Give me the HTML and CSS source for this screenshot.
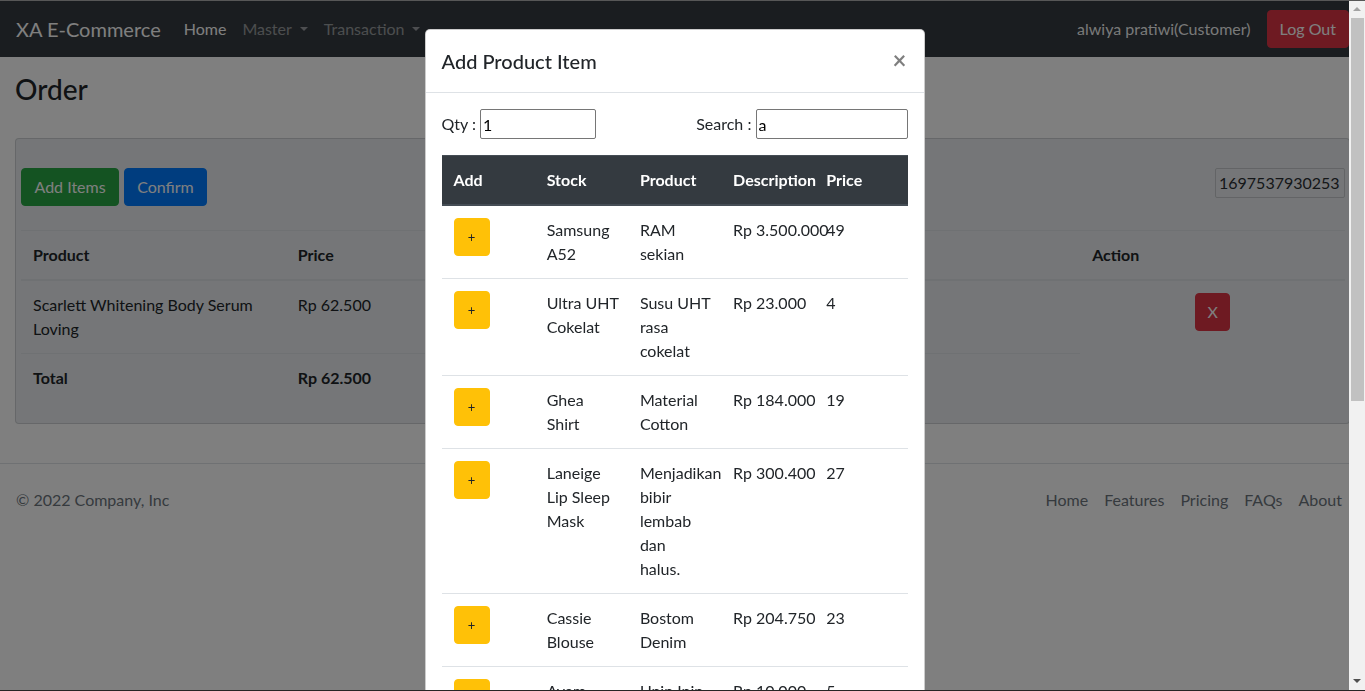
FILE: index.html
```html
<!DOCTYPE html>
<html lang="en">
<head>
<meta charset="utf-8">
<title>Order - XA E-Commerce</title>
<link rel="stylesheet" href="styles.css">
</head>
<body>
<nav class="navbar">
  <a class="brand">XA E-Commerce</a>
  <ul class="nav">
    <li><a class="nav-link active">Home</a></li>
    <li><a class="nav-link dropdown">Master</a></li>
    <li><a class="nav-link dropdown">Transaction</a></li>
  </ul>
  <div class="nav-user">
    <span class="user">alwiya pratiwi(Customer)</span>
    <button class="btn btn-danger">Log Out</button>
  </div>
</nav>

<main class="container">
  <h3 class="page-title">Order</h3>
  <div class="card">
    <div class="card-toolbar">
      <div class="btn-row">
        <button class="btn btn-success">Add Items</button>
        <button class="btn btn-primary">Confirm</button>
      </div>
      <input class="order-no" value="1697537930253">
    </div>
    <table class="table order-table">
      <thead>
        <tr><th>Product</th><th>Price</th><th>Qty</th><th>Sub Total</th><th>Action</th></tr>
      </thead>
      <tbody>
        <tr>
          <td>Scarlett Whitening Body Serum Loving</td>
          <td>Rp 62.500</td>
          <td>1</td>
          <td>Rp 62.500</td>
          <td rowspan="2" class="center"><button class="btn btn-danger btn-x">X</button></td>
        </tr>
        <tr class="total">
          <td>Total</td><td>Rp 62.500</td><td></td><td></td>
        </tr>
      </tbody>
    </table>
  </div>
</main>

<footer class="footer">
  <span class="copy">© 2022 Company, Inc</span>
  <ul class="footer-nav">
    <li><a>Home</a></li>
    <li><a>Features</a></li>
    <li><a>Pricing</a></li>
    <li><a>FAQs</a></li>
    <li><a>About</a></li>
  </ul>
</footer>

<div class="backdrop"></div>

<div class="modal">
  <div class="modal-dialog">
    <div class="modal-content">
      <div class="modal-header">
        <h5 class="modal-title">Add Product Item</h5>
        <button class="close">×</button>
      </div>
      <div class="modal-body">
        <div class="filters">
          <label>Qty : <input class="qty" value="1"></label>
          <label>Search : <input class="search" value="a"></label>
        </div>
        <table class="table product-table">
          <thead>
            <tr><th>Add</th><th>Stock</th><th>Product</th><th>Description</th><th>Price</th></tr>
          </thead>
          <tbody>
            <tr><td><button class="btn btn-warning btn-add">+</button></td><td>Samsung<br>A52</td><td>RAM<br>sekian</td><td class="nw">Rp 3.500.000</td><td>49</td></tr>
            <tr><td><button class="btn btn-warning btn-add">+</button></td><td>Ultra UHT<br>Cokelat</td><td>Susu UHT<br>rasa<br>cokelat</td><td class="nw">Rp 23.000</td><td>4</td></tr>
            <tr><td><button class="btn btn-warning btn-add">+</button></td><td>Ghea<br>Shirt</td><td>Material<br>Cotton</td><td class="nw">Rp 184.000</td><td>19</td></tr>
            <tr><td><button class="btn btn-warning btn-add">+</button></td><td>Laneige<br>Lip Sleep<br>Mask</td><td>Menjadikan<br>bibir<br>lembab<br>dan<br>halus.</td><td class="nw">Rp 300.400</td><td>27</td></tr>
            <tr><td><button class="btn btn-warning btn-add">+</button></td><td>Cassie<br>Blouse</td><td>Bostom<br>Denim</td><td class="nw">Rp 204.750</td><td>23</td></tr>
            <tr><td><button class="btn btn-warning btn-add">+</button></td><td>Ayam<br>Goreng</td><td>Unin Inin</td><td class="nw">Rp 10.000</td><td>5</td></tr>
          </tbody>
        </table>
      </div>
    </div>
  </div>
</div>

<div class="scrollbar">
  <span class="arrow up"></span>
  <span class="thumb"></span>
  <span class="arrow down"></span>
</div>
<div class="frame"></div>
</body>
</html>
```

FILE: styles.css
```css
* { box-sizing: border-box; }

html, body { height: 100%; }

body {
  margin: 0;
  padding-top: 1px;
  font-family: Lato, "Liberation Sans", sans-serif;
  font-size: 16px;
  line-height: 1.5;
  color: #212529;
  background: #fff;
  overflow: hidden;
}

ul { list-style: none; margin: 0; padding: 0; }

/* ---------- navbar ---------- */
.navbar {
  display: flex;
  align-items: center;
  height: 56px;
  padding: 8px 16px;
  background: #343a40;
}
.brand {
  font-size: 20px;
  line-height: 30px;
  padding: 5px 0;
  margin-right: 15px;
  color: #fff;
}
.nav { display: flex; }
.nav-link {
  display: block;
  padding: 8px;
  color: rgba(255, 255, 255, .5);
}
.nav-link.active { color: #fff; }
.dropdown::after {
  content: "";
  display: inline-block;
  margin-left: 8px;
  vertical-align: .255em;
  border-top: .3em solid;
  border-right: .3em solid transparent;
  border-left: .3em solid transparent;
}
.nav-user {
  margin-left: auto;
  display: flex;
  align-items: center;
  gap: 16px;
}
.user { color: rgba(255, 255, 255, .95); }

/* ---------- buttons ---------- */
.btn {
  display: inline-block;
  font-family: inherit;
  font-size: 16px;
  line-height: 24px;
  padding: 6px 12px;
  border: 1px solid transparent;
  border-radius: 4px;
  color: #fff;
  cursor: pointer;
}
.btn-danger { background: #dc3545; border-color: #dc3545; }
.btn-success { background: #28a745; border-color: #28a745; }
.btn-primary { background: #007bff; border-color: #007bff; }
.btn-warning { background: #ffc107; border-color: #ffc107; color: #212529; }

/* ---------- page ---------- */
.container { padding: 0 15px; }
.page-title {
  font-size: 28px;
  font-weight: 500;
  line-height: 1.2;
  margin: 16px 0 31px 0;
}
.card {
  background: #eaedf0;
  border: 1px solid rgba(0, 0, 0, .125);
  border-radius: 4px;
  padding: 29px 4px 5px 5px;
}
.card-toolbar {
  display: flex;
  justify-content: space-between;
  align-items: flex-start;
}
.btn-row { display: flex; gap: 5px; }
.btn-row .btn-success { padding: 6px 12.5px; }
.order-no {
  width: 130px;
  height: 30px;
  font-family: inherit;
  font-size: 16px;
  color: #2b2f33;
  padding: 1px 3px;
  background: transparent;
  border: 1px solid #c6c9cc;
  border-radius: 2px;
}

.table {
  width: 100%;
  border-collapse: collapse;
  table-layout: fixed;
  margin-bottom: 16px;
}
.table th, .table td {
  padding: 12px;
  text-align: left;
  vertical-align: top;
  border-top: 1px solid #dee2e6;
}
.table th { font-weight: 700; }
.order-table { margin-top: 24px; }
.order-table thead th { border-bottom: 2px solid #dee2e6; }
.order-table .center { text-align: center; }
.order-table .total td { font-weight: 700; }
.btn-x { padding: 6px 11px; }

/* ---------- footer ---------- */
.footer {
  margin-top: 39px;
  border-top: 1px solid #dee2e6;
  padding: 16px 15px;
  display: flex;
  justify-content: space-between;
  align-items: center;
}
.copy { color: #6c757d; padding-left: 1px; }
.footer-nav { display: flex; }
.footer-nav a { display: block; padding: 8px; color: #6c757d; }

/* ---------- modal ---------- */
.backdrop {
  position: fixed;
  inset: 0;
  background: rgba(0, 0, 0, .5);
}
.modal {
  position: fixed;
  top: 1px;
  left: 0;
  right: 16px;
  bottom: 0;
  overflow: hidden;
}
.modal-dialog {
  width: 500px;
  margin: 28px auto;
}
.modal-content {
  background: #fff;
  border: 1px solid rgba(0, 0, 0, .2);
  border-radius: 5px;
}
.modal-header {
  display: flex;
  justify-content: space-between;
  align-items: flex-start;
  padding: 16px;
  border-bottom: 1px solid #dee2e6;
}
.modal-title {
  margin: 0;
  font-size: 20px;
  font-weight: 500;
  line-height: 30px;
}
.close {
  margin: -16px -16px -16px auto;
  padding: 18px 17px 14px 15px;
  background: transparent;
  border: 0;
  font-family: inherit;
  font-size: 24px;
  font-weight: 700;
  line-height: 1;
  color: #000;
  opacity: .5;
}
.modal-body { padding: 16px; }
.filters {
  display: flex;
  justify-content: space-between;
  align-items: center;
  margin-bottom: 16px;
}
.filters label { display: flex; align-items: center; white-space: pre; }
.filters input {
  height: 30px;
  font-family: inherit;
  font-size: 16px;
  color: #000;
  padding: 1px 2px;
  border: 1px solid #767676;
  border-radius: 2px;
}
.qty { width: 116px; }
.search { width: 152px; }

.product-table td { white-space: nowrap; }
.product-table thead th {
  background: #343a40;
  color: #fff;
  border-color: #454d55;
  border-bottom: 2px solid #454d55;
}
.btn-add {
  width: 36px;
  height: 38px;
  padding: 0;
  font-size: 13px;
  line-height: 1;
}

/* ---------- chrome ---------- */
.scrollbar {
  position: fixed;
  top: 1px;
  right: 0;
  bottom: 1px;
  width: 16px;
  background: #f1f1f1;
}
.thumb {
  position: absolute;
  top: 17px;
  left: 2px;
  right: 1px;
  height: 383px;
  background: #c1c1c1;
}
.arrow {
  position: absolute;
  left: 4px;
  width: 0;
  height: 0;
  border-left: 4px solid transparent;
  border-right: 4px solid transparent;
}
.arrow.up { top: 6px; border-bottom: 4px solid #a3a3a3; }
.arrow.down { bottom: 7px; border-top: 4px solid #505050; }
.frame {
  position: fixed;
  inset: 0;
  border-top: 1px solid #575757;
  border-bottom: 1px solid #262626;
  pointer-events: none;
}
```
